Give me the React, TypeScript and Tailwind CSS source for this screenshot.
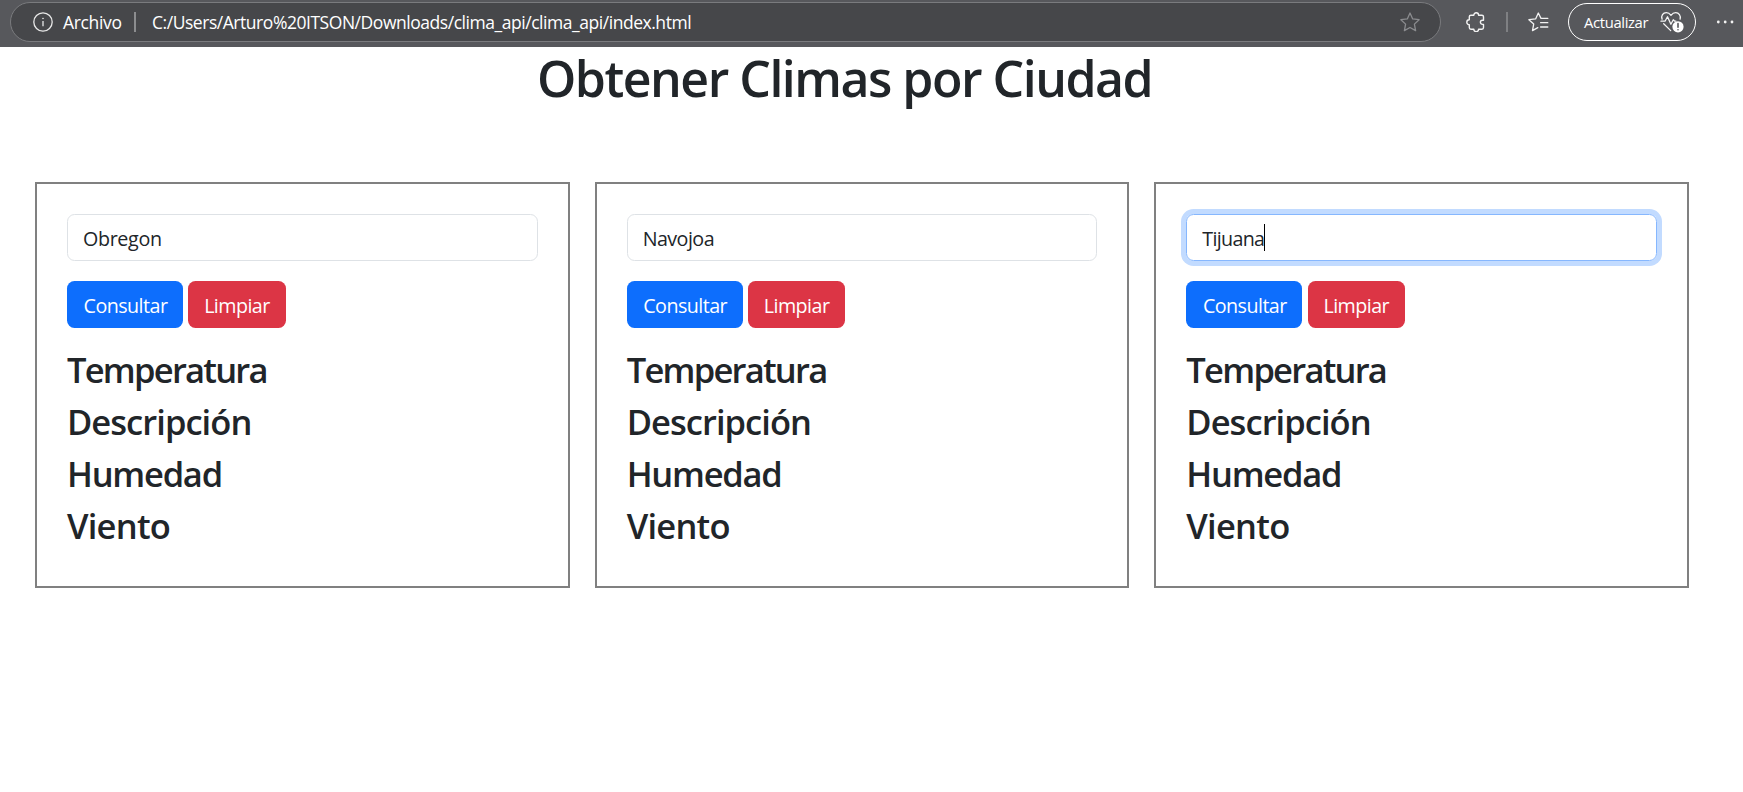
import React from "react";

type CityCard = {
  city: string;
  cityClass: string;
  focused?: boolean;
};

const cards: CityCard[] = [
  { city: "Obregon", cityClass: "tracking-[-0.35px]" },
  { city: "Navojoa", cityClass: "tracking-[-0.55px]" },
  { city: "Tijuana", cityClass: "tracking-[-0.7px]", focused: true },
];

const readings = [
  { label: "Temperatura", spacing: "tracking-[-1.75px]" },
  { label: "Descripción", spacing: "tracking-[-0.95px]" },
  { label: "Humedad", spacing: "tracking-[-1.25px]" },
  { label: "Viento", spacing: "tracking-[-0.75px]" },
];

function InfoIcon() {
  return (
    <svg className="h-5 w-5 shrink-0" viewBox="0 0 20 20" fill="none" stroke="#e8e8e8" strokeWidth="1.3">
      <circle cx="10" cy="10" r="9.2" />
      <path d="M10 9v5.2" />
      <circle cx="10" cy="6.4" r="0.5" fill="#e8e8e8" strokeWidth="0.6" />
    </svg>
  );
}

function StarIcon() {
  return (
    <svg className="h-5 w-5 shrink-0" viewBox="0 0 20 20" fill="none" stroke="#8b8c8f" strokeWidth="1.3" strokeLinejoin="round">
      <path d="M10 1l2.7 5.9 6.4.8-4.7 4.4 1.2 6.5L10 15.5l-5.6 3.1 1.2-6.5L.9 7.7l6.4-.8z" />
    </svg>
  );
}

function PuzzleIcon() {
  return (
    <svg className="h-5 w-5 shrink-0" viewBox="0 0 20 20" fill="none" stroke="#f2f2f2" strokeWidth="1.4" strokeLinejoin="round">
      <path d="M4.9 3.2H7.8a2.4 2.4 0 0 1 4.8 0h3.3q1.6 0 1.6 1.6v3.4h-1a2.1 2.1 0 0 0 0 4.2h1v3.2q0 1.6-1.6 1.6h-3.3a2.4 2.4 0 0 1-4.8 0H4.9q-1.6 0-1.6-1.6v-2.8a2.5 2.5 0 0 1 0-5V4.8q0-1.6 1.6-1.6z" />
    </svg>
  );
}

function FavoritesIcon() {
  return (
    <svg className="h-5 w-[21px] shrink-0" viewBox="0 0 21 20" fill="none" stroke="#f2f2f2" strokeWidth="1.3" strokeLinejoin="round" strokeLinecap="round">
      <path d="M19.8 6.4H13L10.3 1 7.6 6.9l-6.7.8 4.8 4.4-1.2 6.5 5.3-3" />
      <path d="M12.6 10.7h7.2M12.6 15h7.2" />
    </svg>
  );
}

function HealthIcon() {
  return (
    <svg className="h-[22px] w-6 shrink-0" viewBox="0 0 24 22" fill="none" stroke="#f5f5f5" strokeWidth="1.3" strokeLinejoin="round" strokeLinecap="round">
      <path d="M2.1 8.2C.8 4.8 3 1.7 6.3 1.7c2 0 3.5 1 4.7 2.6 1.2-1.6 2.7-2.6 4.7-2.6 3.2 0 5.3 2.7 4.4 6.4" />
      <path d="M1 10.2h4l2.5-4.5 3.4 7.5 2.4-4.4 1.4 1.4h1.2M3.7 12.8l7 6.8" />
      <circle cx="18" cy="15.8" r="5.6" fill="#fff" stroke="none" />
      <path d="M18 12.5v3.7M18 18.7v.1" stroke="#4c4d50" strokeWidth="1.5" />
    </svg>
  );
}

function BrowserBar() {
  return (
    <header className="flex h-[47px] items-start bg-[#57585c] font-['Open_Sans',sans-serif] text-white">
      <div className="ml-[10px] mt-[2px] flex h-10 w-[1431px] shrink-0 items-center rounded-full border border-[#7a7b7e] bg-[#46474a] pl-[22px] pr-5">
        <InfoIcon />
        <span className="ml-[10px] w-[61px] whitespace-nowrap pt-px text-[17.5px] tracking-[-0.35px]">Archivo</span>
        <span className="ml-[10px] h-5 w-[2px] shrink-0 bg-[#8c8d8f]" />
        <span className="ml-4 flex-1 whitespace-nowrap text-[17.5px] tracking-[-0.457px]">
          C:/Users/Arturo%20ITSON/Downloads/clima_api/clima_api/index.html
        </span>
        <StarIcon />
      </div>
      <div className="ml-[25px] flex h-11 items-center">
        <PuzzleIcon />
        <span className="ml-[20px] h-5 w-[2px] bg-[#7f8083]" />
        <span className="ml-5 flex">
          <FavoritesIcon />
        </span>
      </div>
      <div className="ml-[19px] mt-[3px] flex h-[38px] w-[128px] shrink-0 items-center justify-between rounded-full border-[1.5px] border-white pl-[15px] pr-[11px]">
        <span className="whitespace-nowrap text-[14.8px] tracking-[-0.35px]">Actualizar</span>
        <HealthIcon />
      </div>
      <svg className="ml-5 mt-[19px] h-[6px] w-[18px] shrink-0" viewBox="0 0 18 6" fill="#f2f2f2">
        <circle cx="2.3" cy="3" r="1.4" />
        <circle cx="9.2" cy="3" r="1.4" />
        <circle cx="16" cy="3" r="1.4" />
      </svg>
    </header>
  );
}

function Card({ city, cityClass, focused }: CityCard) {
  return (
    <section className="h-[406px] flex-1 border-2 border-[#808080] px-[30px] pt-[30px]">
      <div
        className={
          focused
            ? "flex h-[47px] items-center rounded-[7.5px] border border-[#86b7fe] px-[15px] shadow-[0_0_0_5px_#c2dbff]"
            : "flex h-[47px] items-center rounded-[7.5px] border border-[#dee2e6] px-[15px]"
        }
      >
        <span className={`pt-[3px] ${cityClass}`}>{city}</span>
        {focused && <span className="h-[27px] w-px bg-black" />}
      </div>
      <div className="mt-5 flex gap-[5.3px] text-white">
        <button className="flex h-[47px] w-[116px] items-center justify-center rounded-[7.5px] bg-[#0d6efd] pl-px pt-[3px] tracking-[-0.55px]">
          Consultar
        </button>
        <button className="flex h-[47px] w-[97.3px] items-center justify-center rounded-[7.5px] bg-[#dc3545] pt-[3px] tracking-[-0.55px]">
          Limpiar
        </button>
      </div>
      <div className="mt-[21px] flex flex-col gap-[10px] text-[34.5px] font-semibold leading-[42px]">
        {readings.map((r) => (
          <h3 key={r.label} className={r.spacing}>
            {r.label}
          </h3>
        ))}
      </div>
    </section>
  );
}

export default function App() {
  return (
    <div className="h-[792px] w-[1743px] overflow-hidden bg-white font-['Open_Sans',sans-serif] text-[19.7px] text-[#212529]">
      <BrowserBar />
      <main className="pl-[35px] pr-[54px]">
        <h1 className="ml-[502px] h-[60px] whitespace-nowrap text-[50px] font-semibold leading-[62px] tracking-[-1.5px]">
          Obtener Climas por Ciudad
        </h1>
        <div className="mt-[75px] flex gap-[25px]">
          {cards.map((card) => (
            <Card key={card.city} {...card} />
          ))}
        </div>
      </main>
    </div>
  );
}
